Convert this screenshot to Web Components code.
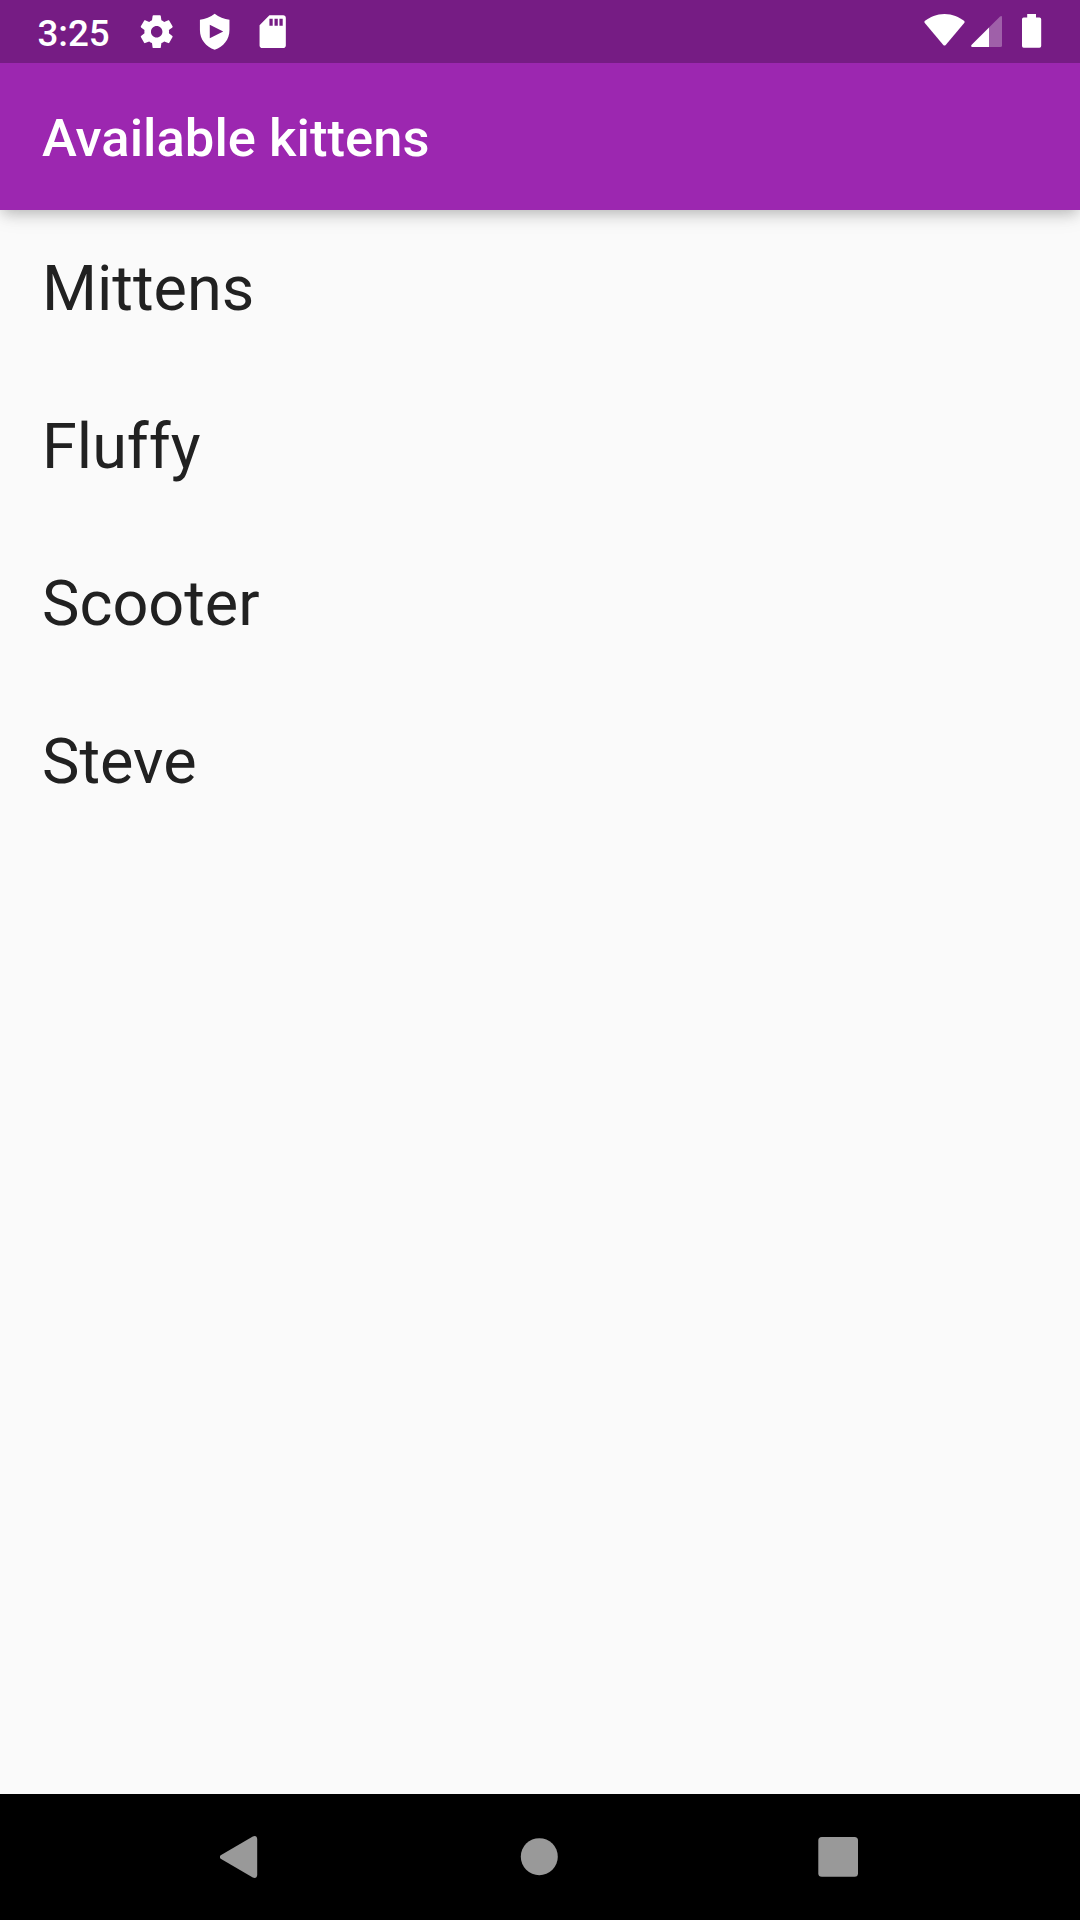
<!DOCTYPE html>
<html lang="en">
<head>
<meta charset="utf-8">
<title>Available kittens</title>
<style>
html,body{margin:0;height:100%;background:#fafafa;overflow:hidden}
body{font-family:Roboto,"Noto Sans",sans-serif}
</style>
</head>
<body>
<kitten-app></kitten-app>
<script>
const define = (name, html) => customElements.define(name, class extends HTMLElement {
  constructor() {
    super();
    this.attachShadow({ mode: 'open' }).innerHTML = html;
  }
});

define('status-bar', `
<style>
:host{display:flex;height:63px;background:#761c84;color:#fff;justify-content:space-between;box-sizing:border-box;position:relative;z-index:2}
.side{display:flex;align-items:flex-start}
.left{padding-left:37.4px}
.time{font-size:36.75px;font-weight:500;line-height:43px;padding-top:11.5px;width:99.8px}
.notes{display:flex;gap:18.6px;padding-top:12px}
.right{padding:12px 36px 0 0}
svg{display:block;fill:#fff}
</style>
<div class="side left"><span class="time">3:25</span>
<div class="notes">
<svg width="39.4" height="39.4" viewBox="0 0 24 24"><path d="M19.43 12.98c.04-.32.07-.64.07-.98s-.03-.66-.07-.98l2.11-1.65c.19-.15.24-.42.12-.64l-2-3.46c-.12-.22-.39-.3-.61-.22l-2.49 1c-.52-.4-1.08-.73-1.69-.98l-.38-2.65C14.46 2.18 14.25 2 14 2h-4c-.25 0-.46.18-.49.42l-.38 2.65c-.61.25-1.17.59-1.69.98l-2.49-1c-.23-.09-.49 0-.61.22l-2 3.46c-.13.22-.07.49.12.64l2.11 1.65c-.04.32-.07.65-.07.98s.03.66.07.98l-2.11 1.65c-.19.15-.24.42-.12.64l2 3.46c.12.22.39.3.61.22l2.49-1c.52.4 1.08.73 1.69.98l.38 2.65c.03.24.24.42.49.42h4c.25 0 .46-.18.49-.42l.38-2.65c.61-.25 1.17-.59 1.69-.98l2.49 1c.23.09.49 0 .61-.22l2-3.46c.12-.22.07-.49-.12-.64l-2.11-1.65zM12 15.5c-1.93 0-3.5-1.57-3.5-3.5s1.57-3.5 3.5-3.5 3.5 1.57 3.5 3.5-1.57 3.5-3.5 3.5z"/></svg>
<svg width="39.4" height="39.4" viewBox="0 0 24 24"><path fill-rule="evenodd" d="M12 1C9.5 2.9 6.2 4.2 3 4.7V11c0 5.8 3.7 10.2 9 12 5.3-1.8 9-6.2 9-12V4.7C17.8 4.2 14.5 2.9 12 1zM9 7.8v8.2l8.2-4.1z"/></svg>
<svg width="39.4" height="39.4" viewBox="0 0 24 24"><path fill-rule="evenodd" d="M18.4 2H10L4 8v12.4c0 .9.7 1.6 1.6 1.6h12.8c.9 0 1.6-.7 1.6-1.6V3.6c0-.9-.7-1.6-1.6-1.6zM10 4.1h2v4.3h-2zM13.1 4.1h2v4.3h-2zM16.1 4.1h2v4.3h-2z"/></svg>
</div></div>
<div class="side right">
<svg width="120" height="40" viewBox="0 0 120 40">
<path d="M20.5 2C12.5 2 6 5 1 8.8Q-.1 9.7.8 10.9L19.3 33Q20.5 34.2 21.7 33L40.2 10.9Q41.1 9.7 40 8.8C35 5 28.5 2 20.5 2z"/>
<path opacity=".3" d="M65 15.5L75.8 4.7Q78 3 78 5.5V33.5Q78 35 76.5 35H65z"/>
<path d="M47.7 32.8L65 15.5V35H48.3Q46.3 34.5 47.7 32.8z"/>
<path d="M103.2 2h8.8v3.6h3.5q1.7 0 1.7 1.7V34q0 1.7-1.7 1.7H99.7q-1.7 0-1.7-1.7V7.3q0-1.7 1.7-1.7h3.5z"/>
</svg></div>`);

define('app-bar', `
<style>
:host{display:flex;align-items:center;height:147px;padding:3px 42px 0;box-sizing:border-box;background:#9c27b0;color:#fff;
position:relative;font-size:52.5px;font-weight:500;line-height:62px;letter-spacing:.05px;
box-shadow:0 6px 13px -3px rgba(0,0,0,.2),0 5px 20px rgba(0,0,0,.1)}
</style><slot></slot>`);

define('kitten-row', `
<style>
:host{display:flex;align-items:center;height:157.5px;padding:.7px 42px 0;box-sizing:border-box;color:#212121;font-size:63px;line-height:74px}
</style><slot></slot>`);

define('nav-bar', `
<style>
:host{display:flex;height:126px;background:#000;align-items:center;justify-content:center}
svg{display:block;fill:#999;flex:none}
.key{width:299px;display:flex;justify-content:center}
</style>
<div class="key"><svg width="42" height="44" viewBox="0 0 42 44"><path d="M.7 20.3L32.8 1.4Q36.8-.2 37.2 4V40Q36.8 44 32.8 42.6L.7 23.7Q-1.1 22 .7 20.3z"/></svg></div>
<div class="key"><svg width="40" height="40" viewBox="0 0 40 40"><circle cx="19.3" cy="19.7" r="18.5"/></svg></div>
<div class="key"><svg width="42" height="42" viewBox="0 0 42 42"><rect x=".3" y="1" width="39.7" height="39.7" rx="3.5"/></svg></div>`);

define('kitten-app', `
<style>
:host{display:flex;flex-direction:column;width:1080px;height:1920px;background:#fafafa}
main{flex:1}
</style>
<status-bar></status-bar>
<app-bar>Available kittens</app-bar>
<main><kitten-row>Mittens</kitten-row><kitten-row>Fluffy</kitten-row><kitten-row>Scooter</kitten-row><kitten-row>Steve</kitten-row></main>
<nav-bar></nav-bar>`);
</script>
</body>
</html>
